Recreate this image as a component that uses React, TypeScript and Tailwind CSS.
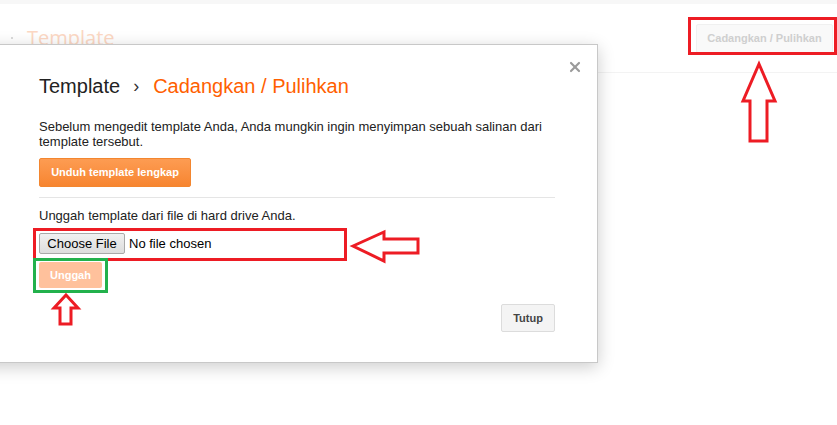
import { X } from "lucide-react"

export default function App() {
    return (
        <div className="relative w-[837px] h-[425px] overflow-hidden bg-white font-['Liberation_Sans',Arial,sans-serif]">
            {/* page behind the dialog, washed out */}
            <div className="h-[4px] bg-[#f7f7f7]"></div>
            <div className="flex h-[69px] items-center justify-between border-b border-[#f3f3f3] pr-[4px]">
                <div className="flex items-center gap-x-[14px] pl-[11px]">
                    <span className="h-[2px] w-[2px] rounded-full bg-[#cfcfcf]"></span>
                    <h1 className="font-['Open_Sans',sans-serif] text-[20px] text-[#fcd8c4]">Template</h1>
                </div>
                <button className="h-[29px] w-[137px] rounded-[2px] border border-[#f0f0f0] bg-[#f9f9f9] text-[11px] font-bold text-[#cfcfcf]">
                    Cadangkan / Pulihkan
                </button>
            </div>

            {/* dialog */}
            <div className="absolute left-[-21px] top-[44px] h-[319px] w-[619px] border border-[#c8c8c8] bg-white pl-[59px] pr-[42px] pt-[29px] shadow-[0_4px_16px_rgba(0,0,0,0.2)]">
                <button className="absolute right-[14px] top-[14px] text-[#9a9a9a]">
                    <X size={16} strokeWidth={3.2} />
                </button>
                <h2 className="flex items-center text-[20px] leading-[24px] text-[#222]">
                    Template
                    <span className="pl-[13px] pr-[14px] text-[18px] text-[#333]">›</span>
                    <span className="text-[#ff6000]">Cadangkan / Pulihkan</span>
                </h2>
                <p className="mt-[21px] text-[13px] leading-[15px] text-[#222]">
                    Sebelum mengedit template Anda, Anda mungkin ingin menyimpan sebuah salinan dari template tersebut.
                </p>
                <button className="mt-[9px] h-[29px] w-[152px] rounded-[2px] border border-[#f3862f] bg-gradient-to-b from-[#fd9c52] to-[#f7852f] text-[11px] font-bold text-white">
                    Unduh template lengkap
                </button>
                <div className="mt-[10px] border-t border-[#e5e5e5]"></div>
                <p className="mt-[10px] text-[13px] leading-[15px] text-[#222]">
                    Unggah template dari file di hard drive Anda.
                </p>
                <div className="mt-[10px] flex items-center gap-x-[4px]">
                    <button className="h-[21px] w-[86px] rounded-[2px] border border-[#a9a9a9] bg-gradient-to-b from-[#f0f0f0] to-[#dddddd] text-[13px] text-black">
                        Choose File
                    </button>
                    <span className="text-[13px] text-black">No file chosen</span>
                </div>
                <button className="mt-[8px] h-[26px] w-[63px] rounded-[2px] bg-[#ffc19c] text-[11px] font-bold text-white">
                    Unggah
                </button>
                <div className="mt-[16px] flex justify-end">
                    <button className="h-[28px] w-[54px] rounded-[2px] border border-[#dcdcdc] bg-[#f4f4f4] text-[11px] font-bold text-[#444]">
                        Tutup
                    </button>
                </div>
            </div>

            {/* red / green annotations drawn over the screenshot */}
            <svg className="absolute left-0 top-0" width="837" height="425" fill="none" strokeWidth="3" strokeLinejoin="miter">
                <rect x="689.5" y="18.5" width="146" height="35" stroke="#ed1c24" />
                <polygon points="759,64 775,101 767,101 767,141 750,141 750,101 743,101" stroke="#ed1c24" />
                <rect x="34.5" y="229.5" width="311" height="30" stroke="#ed1c24" />
                <polygon points="353,246 384,232 384,239 418,239 418,253 384,253 384,261" stroke="#ed1c24" />
                <rect x="34.5" y="259.5" width="72" height="32" stroke="#22b14c" />
                <polygon points="66,295 78,308 71,308 71,324 60,324 60,308 54,308" stroke="#ed1c24" />
            </svg>
        </div>
    )
}
